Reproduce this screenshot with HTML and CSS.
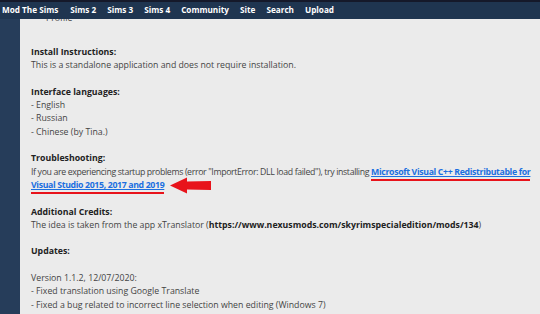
FILE: index.html
```html
<!DOCTYPE html>
<html lang="en">

<head>
    <meta charset="UTF-8">
    <meta name="viewport" content="width=device-width, initial-scale=1.0">
    <title>Mod The Sims | Download</title>
    <link rel="stylesheet" href="styles.css">
</head>

<body>
    <nav class="navbar">
        <a class="nav-link brand" href="#">Mod The Sims</a>
        <a class="nav-link" href="#">Sims 2</a>
        <a class="nav-link" href="#">Sims 3</a>
        <a class="nav-link" href="#">Sims 4</a>
        <a class="nav-link" href="#">Community</a>
        <a class="nav-link" href="#">Site</a>
        <a class="nav-link" href="#">Search</a>
        <a class="nav-link" href="#">Upload</a>
    </nav>

    <div class="page">
        <div class="sidebar"></div>

        <div class="content">
            <ul class="feature-list">
                <li>Profile</li>
            </ul>

            <!-- Install -->
            <div class="section">
                <h3>Install Instructions:</h3>
                <p>This is a standalone application and does not require installation.</p>
            </div>

            <!-- Languages -->
            <div class="section">
                <h3>Interface languages:</h3>
                <p>- English</p>
                <p>- Russian</p>
                <p>- Chinese (by Tina.)</p>
            </div>

            <!-- Troubleshooting -->
            <div class="section">
                <h3>Troubleshooting:</h3>
                <p class="tight">If you are experiencing startup problems (error "ImportError: DLL load failed"), try installing <span class="marked"><a class="link" href="#">Microsoft Visual C++ Redistributable for Visual Studio 2015, 2017 and 2019</a></span><svg class="arrow" width="42" height="17" viewBox="0 0 42 17"><path d="M0 8.5 L17 0.5 L17 4.5 L41 4 L41 13 L17 12.5 L17 16.5 Z" fill="#e8131b"/></svg></p>
            </div>

            <!-- Credits -->
            <div class="section">
                <h3>Additional Credits:</h3>
                <p>The idea is taken from the app xTranslator (<b>https://www.nexusmods.com/skyrimspecialedition/mods/134</b>)</p>
            </div>

            <!-- Updates -->
            <div class="section">
                <h3>Updates:</h3>
                <p class="spacer"></p>
                <p>Version 1.1.2, 12/07/2020:</p>
                <p>- Fixed translation using Google Translate</p>
                <p>- Fixed a bug related to incorrect line selection when editing (Windows 7)</p>
            </div>
        </div>
    </div>
</body>

</html>
```

FILE: styles.css
```css
* {
    margin: 0;
    padding: 0;
    box-sizing: border-box;
    font-family: 'Open Sans', 'Noto Sans', sans-serif;
}

body {
    background-color: #ebebeb;
    color: #444;
    font-size: 8.75px;
    line-height: 13.3px;
    overflow: hidden;
}

.navbar {
    background-color: #1f3550;
    border-top: 2px solid #15192a;
    height: 19px;
    display: flex;
    align-items: center;
    gap: 11px;
    padding: 0 2px 1px;
}

.nav-link {
    color: #ffffff;
    font-weight: bold;
    font-size: 8.2px;
    text-decoration: none;
}

.brand {
    margin-right: 1px;
}

.page {
    display: flex;
    height: 295px;
}

.sidebar {
    width: 20px;
    background-color: #263d5a;
}

.content {
    flex: 1;
    background-color: #ebebeb;
    padding: 0 5px 0 11px;
    overflow: hidden;
}

.feature-list {
    margin-top: -7px;
    padding-left: 15px;
    height: 34px;
}

.section {
    margin-bottom: 13.3px;
}

h3 {
    font-size: 8.75px;
    font-weight: bold;
    color: #222;
}

.spacer {
    height: 13.3px;
}

b {
    color: #222;
}

.tight {
    letter-spacing: -0.35px;
}

.link {
    color: #1b6fe0;
    font-weight: bold;
    text-decoration: underline;
}

.marked {
    border-bottom: 2px solid #e8131b;
    padding-bottom: 1px;
}

.arrow {
    vertical-align: middle;
    margin: -5px 0 -5px 6px;
}
```
